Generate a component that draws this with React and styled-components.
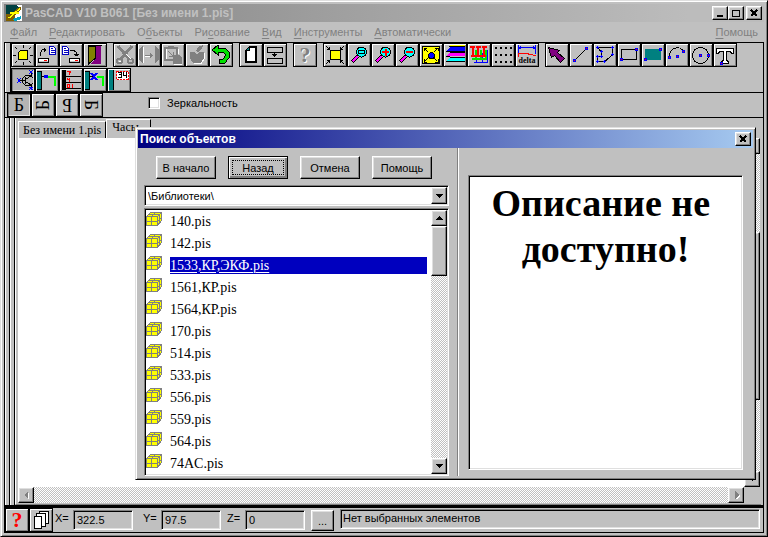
import React, { useState } from "react";
import styled, { createGlobalStyle, css } from "styled-components";

const GlobalStyle = createGlobalStyle`
  *, *::before, *::after { box-sizing: border-box; }
  html, body { margin: 0; height: 100%; }
  body { background: #c0c0c0; overflow: hidden; }
  #root { height: 100%; }
  body, button, input, select { font-family: "Liberation Sans", Arial, sans-serif; font-size: 11px; color: #000; }
  button, input, select, ul { margin: 0; padding: 0; border-radius: 0; }
`;

const face = "#c0c0c0";
const shade = "#808080";
const serif = '"Liberation Serif", "Times New Roman", serif';

const raised = css`
  border: 1px solid;
  border-color: #fff #000 #000 #fff;
  box-shadow: inset -1px -1px 0 ${shade}, inset 1px 1px 0 #dfdfdf;
`;
const sunken = css`
  border: 1px solid;
  border-color: ${shade} #fff #fff ${shade};
  box-shadow: inset 1px 1px 0 #000, inset -1px -1px 0 #dfdfdf;
`;
const checker = css`
  background: repeating-conic-gradient(#fff 0 25%, ${face} 0 50%) 0 0 / 2px 2px;
`;

/* ---------- main window ---------- */

const Window = styled.main`
  position: relative;
  display: flex;
  flex-direction: column;
  height: 100vh;
  padding: 3px;
  background: ${face};
  border: 1px solid;
  border-color: #dfdfdf #000 #000 #dfdfdf;
  box-shadow: inset 1px 1px 0 #fff, inset -1px -1px 0 ${shade};
`;

const TitleBar = styled.header`
  display: flex;
  align-items: center;
  flex: none;
  height: 18px;
  padding: 0 2px;
  gap: 3px;
  font-weight: bold;
  color: ${(p) => (p.$active ? "#fff" : face)};
  background: ${(p) =>
    p.$active
      ? "linear-gradient(90deg, #000080, #a6caf0)"
      : "linear-gradient(90deg, #808080, #a0a0a0 45%, #bcbcbc 90%)"};
`;

const Title = styled.h1`
  flex: 1;
  margin: 0;
  font-size: 12px;
  line-height: 18px;
  white-space: nowrap;
`;

const CaptionButtons = styled.div`
  display: flex;
  gap: ${(p) => p.$gap || 0}px;
`;

const CaptionButton = styled.button`
  display: grid;
  place-items: center;
  width: 16px;
  height: 14px;
  background: ${face};
  ${raised}
`;

const MenuBar = styled.nav`
  display: flex;
  flex: none;
  gap: 12px;
  height: 20px;
  padding: 0 6px;
`;

const MenuItem = styled.button`
  border: 0;
  background: none;
  color: ${shade};
  line-height: 20px;
  margin-left: ${(p) => (p.$last ? "auto" : 0)};
  u { text-underline-offset: 2px; }
`;

const Frame = styled.div`
  display: flex;
  flex-direction: column;
  flex: 1;
  min-height: 0;
  border: 1px solid #000;
`;

const ToolArea = styled.div`
  display: grid;
  grid-template-columns: 6px 1fr;
  flex: none;
  border-bottom: 1px solid #000;
`;

const Grip = styled.div`
  border-left: 1px solid #fff;
  border-right: 1px solid #000;
`;

const ToolRows = styled.div`
  display: grid;
  gap: 1px;
`;

const ToolRow = styled.div`
  display: flex;
  gap: 6px;
  height: 24px;
`;

const ToolGroup = styled.div`
  display: flex;
`;

const ToolButton = styled.button`
  display: grid;
  place-items: center;
  flex: none;
  width: 24px;
  height: 24px;
  background: ${(p) => (p.$pressed ? "#b4b4b4" : face)};
  border: 1px solid #000;
  box-shadow: ${(p) =>
    p.$pressed
      ? `inset 1px 1px 0 ${shade}, inset -1px -1px 0 #dfdfdf`
      : `inset 1px 1px 0 #fff, inset -1px -1px 0 ${shade}`};
  svg { display: block; width: 20px; height: 20px; }
`;

const OptionRow = styled.div`
  display: flex;
  align-items: center;
  flex: none;
  height: 25px;
  padding-left: 2px;
  border-bottom: 1px solid #000;
`;

const Letter = styled.span`
  display: block;
  font: 18px/18px ${serif};
  transform: rotate(${(p) => p.$turn}deg);
`;

const CheckLabel = styled.label`
  display: flex;
  align-items: center;
  gap: 7px;
  margin: 0 0 4px 45px;
`;

const CheckBox = styled.input`
  appearance: none;
  width: 12px;
  height: 12px;
  margin: 0;
  background: #fff;
  ${sunken}
`;

/* ---------- workspace ---------- */

const Workspace = styled.section`
  display: grid;
  grid-template-columns: 5px 5px 1fr;
  flex: 1;
  min-height: 0;
  padding-right: 2px;
`;

const Sheet = styled.div`
  display: grid;
  grid-template: 20px 1fr 16px / 1fr 16px;
  padding: 0 1px 1px 2px;
  border-left: 1px solid #fff;
  border-bottom: 1px solid ${shade};
`;

const Tabs = styled.div`
  display: flex;
  align-items: flex-end;
  grid-column: 1 / -1;
`;

const Tab = styled.button`
  height: ${(p) => (p.$active ? 19 : 17)}px;
  padding: 0 4px;
  background: ${face};
  font: 12px/15px ${serif};
  border: solid;
  border-width: 1px 1px 0;
  border-color: #fff #000 #fff #fff;
  text-align: left;
  ${(p) => p.$active && "width: 45px; padding: 0 5px 3px;"}
`;

const Canvas = styled.div`
  background: #fff;
`;

const Bar = styled.div`
  display: flex;
  flex-direction: ${(p) => (p.$vertical ? "column" : "row")};
  justify-content: space-between;
  ${checker}
`;

const BarButton = styled.button`
  display: grid;
  place-items: center;
  flex: none;
  width: 16px;
  height: 16px;
  background: ${face};
  ${raised}
`;

const Track = styled.div`
  flex: 1;
  padding: ${(p) => p.$top || 0}px 0 0;
`;

const Thumb = styled.div`
  height: ${(p) => p.$size}px;
  background: ${face};
  ${raised}
`;

/* ---------- status bar ---------- */

const StatusBar = styled.footer`
  display: flex;
  align-items: flex-start;
  flex: none;
  height: 27px;
  border-top: 3px solid #000;
`;

const Coord = styled.label`
  display: flex;
  line-height: 20px;
`;

const CoordName = styled.span`
  width: ${(p) => 18 + p.$indent}px;
  padding-left: ${(p) => p.$indent}px;
`;

const CoordInput = styled.input`
  width: 60px;
  height: 20px;
  margin: 2px 6px 0 0;
  padding: 0 3px;
  background: ${face};
  ${sunken}
`;

const MoreButton = styled.button`
  width: 23px;
  height: 21px;
  margin: 2px 6px 0 0;
  background: ${face};
  ${raised}
`;

const Message = styled.output`
  flex: 1;
  height: 20px;
  margin: 1px 3px 0 0;
  padding: 0 2px;
  line-height: 16px;
  ${sunken}
`;

/* ---------- dialog ---------- */

const Dialog = styled.section`
  position: absolute;
  inset: 126px 11px 56px 134px;
  display: flex;
  flex-direction: column;
  padding: 2px;
  background: ${face};
  border: 1px solid;
  border-color: #dfdfdf #000 #000 #dfdfdf;
  box-shadow: inset 1px 1px 0 #fff, inset -1px -1px 0 ${shade};
`;

const DialogBody = styled.div`
  display: grid;
  grid-template-columns: 320px 1fr;
  flex: 1;
  min-height: 0;
`;

const SearchPane = styled.div`
  display: flex;
  flex-direction: column;
  margin: 0 0 3px;
  padding: 8px 8px 0 6px;
  border-right: 1px solid ${shade};
`;

const Actions = styled.div`
  display: flex;
  gap: 12px;
  margin: 0 0 6px 12px;
`;

const ActionButton = styled.button`
  width: 60px;
  height: 23px;
  background: ${face};
  ${raised}
  ${(p) =>
    p.$current &&
    `outline: 1px dotted #000; outline-offset: -5px;
     border-color: #000;
     box-shadow: inset 1px 1px 0 #fff, inset -2px -2px 0 ${shade};`}
`;

const Combo = styled.div`
  position: relative;
  height: 21px;
  margin-bottom: 2px;
  background: #fff;
  ${sunken}
`;

const ComboSelect = styled.select`
  appearance: none;
  width: 100%;
  height: 19px;
  padding: 0 18px 0 3px;
  border: 0;
  background: none;
`;

const ComboArrow = styled.span`
  position: absolute;
  top: 1px;
  right: 1px;
  display: grid;
  place-items: center;
  width: 16px;
  height: 17px;
  background: ${face};
  pointer-events: none;
  ${raised}
`;

const ListFrame = styled.div`
  display: grid;
  grid-template-columns: 1fr 16px;
  flex: 1;
  min-height: 0;
  padding: 1px;
  background: #fff;
  ${sunken}
`;

const FileList = styled.ul`
  list-style: none;
  overflow: hidden;
`;

const FileRow = styled.li`
  display: grid;
  grid-template-columns: 16px 1fr;
  align-items: center;
  gap: 8px;
  height: 22px;
  padding-right: 4px;
  font: 14px/17px ${serif};
  cursor: default;
  svg { display: block; margin-bottom: 4px; }
`;

const FileName = styled.span`
  ${(p) => p.$selected && "background: #0000bf; color: #fff; text-decoration: underline; text-underline-offset: 2px;"}
`;

const PreviewPane = styled.div`
  display: flex;
  margin-bottom: 3px;
  padding: 27px 10px 6px 9px;
  border-left: 1px solid #fff;
`;

const Preview = styled.article`
  flex: 1;
  padding: 4px 10px;
  background: #fff;
  ${sunken}
`;

const PreviewText = styled.h2`
  margin: 0;
  font: bold 38px/46px ${serif};
  text-align: center;
`;

/* ---------- drawings ---------- */

const Icon = ({ children, smooth }) => (
  <svg viewBox="0 0 20 20" fill="none" stroke="#000" shapeRendering={smooth ? "auto" : "crispEdges"} aria-hidden="true">
    {children}
  </svg>
);

const Node = ({ x, y }) => (
  <g stroke="none">
    <path fill="#0000ff" d={`M${x - 1} ${y - 1}h3v3h-3z`} />
    <path fill="#ff0000" d={`M${x} ${y}h1v1h-1z`} />
  </g>
);

const Disk = ({ x }) => (
  <g transform={`translate(${x} 13)`}>
    <path fill="#fff" stroke="#000" d="M.5 .5h10v4h-10z" />
    <path stroke={face} d="M1 3.5h9" />
    <path stroke="#ff0000" d="M6 2.5h3" />
  </g>
);

const Page = ({ x }) => (
  <g transform={`translate(${x} 1)`}>
    <path fill="#fff" stroke="#0000c0" d="M.5 .5h4l2 2v6h-6z" />
    <path stroke="#0000c0" d="M2 2.5h2M2 4.5h4M2 6.5h4" />
  </g>
);

const CornerArrows = () => (
  <path d="M1 1l3 3M2 4.5h3M4.5 2v3M19 1l-3 3M18 4.5h-3M15.500 2v3M1 19l3-3M2 15.500h3M4.500 18v-3M19 19l-3-3M18 15.500h-3M15.500 18v-3" />
);

const Lens = ({ children }) => (
  <Icon>
    <path stroke="#000" strokeWidth="4" d="M8.500 11.500L3 17" />
    <path stroke="#ff00ff" strokeWidth="2" d="M8.500 11.500L3.500 16.500" />
    <circle cx="12.500" cy="7" r="5" fill="#00ffff" />
    {children}
  </Icon>
);

const Glyph = ({ x, y, size, fill = "#000", children }) => (
  <text x={x} y={y} fontSize={size} fill={fill} stroke="none"
    fontFamily="Liberation Serif" fontWeight="bold" textAnchor="middle">
    {children}
  </text>
);

const icons = {
  sun: (
    <Icon>
      <path fill="#ffff00" d="M7.500 5.500h7v9h-9v-7z" />
      <path d="M10 0v3M10 17v3M0 10.500h3M17 10.500h3M2 2l2 2M18 2l-2 2M2 18l2-2M18 18l-2-2" />
    </Icon>
  ),
  open: (
    <Icon><Disk x={1} /><Page x={12} />
      <path d="M3.500 11V7.500L5.500 4.500H8M7.500 2.500v4M8.500 3.500v2" /></Icon>
  ),
  save: (
    <Icon><Disk x={8} /><Page x={1} />
      <path d="M9 5.500h4l2.500 2V10M13 9.500h5M14 10.500h3" /></Icon>
  ),
  door: (
    <Icon>
      <path fill="#808000" d="M3.500 1h7v12l-7 6z" />
      <path fill="#800080" stroke="none" d="M11 1h5v18H6l5-6z" />
      <path d="M3.500 19V.5h13" />
    </Icon>
  ),
  cut: (
    <Icon>
      <path stroke={shade} strokeWidth="3" d="M3 1l11 13M17 1L6 14" />
      <circle cx="4.500" cy="16" r="2.500" stroke={shade} strokeWidth="2" />
      <circle cx="15.500" cy="16" r="2.500" stroke={shade} strokeWidth="2" />
      <path stroke="#fff" d="M11 9l5 5M4 17l2-1" />
    </Icon>
  ),
  mirror: (
    <Icon>
      <path fill={shade} stroke="none" d="M0 4l4-3v17l-4-3zM20 4l-4-3v17l4-3zM11 7l3 3.500-3 3.500z" />
      <path stroke={shade} d="M6 10.500h6" />
      <path stroke="#fff" d="M4.500 2v16M6 11.500h5" />
    </Icon>
  ),
  paste: (
    <Icon>
      <path stroke={shade} strokeWidth="2" d="M2 3h12v12H2zM5 2h6" />
      <path stroke={shade} d="M5 6l5 5M10.500 7v4.500H6" />
      <path fill={shade} stroke="none" d="M10 10h6l3 3v6h-9z" />
      <path stroke="#fff" d="M3.500 4v10M15.500 4v5M11 19.500h8" />
    </Icon>
  ),
  apple: (
    <Icon>
      <path fill={shade} stroke="none" d="M3 7h4l3 2 3-2h4v6l-3 5H6l-3-5zM9 6l2-4 5-2-1 4-4 3z" />
      <path stroke="#fff" d="M17.500 8v5l-3 5H7" />
    </Icon>
  ),
  undo: (
    <Icon>
      <path stroke="#000" strokeWidth="5" d="M5 5h8l3 3v4l-3 4H8" />
      <path fill="#00e000" d="M1 5l6-5v10z" />
      <path stroke="#00e000" strokeWidth="3" d="M5 5h8l3 3v4l-3 4H9" />
    </Icon>
  ),
  blank: (
    <Icon>
      <path fill="#fff" d="M8.500 1.500h7v16h-11v-12z" />
      <path d="M8 2.500h8M14.500 2v15M5.500 6v11M5 16.500h10" />
      <path fill="#008080" d="M4.500 5.500l4-4v4z" />
    </Icon>
  ),
  insert: (
    <Icon><path d="M2.500 2.500h15v5h-15zM2.500 13.500h15v5h-15zM9.500 7v5M7 9.500h5M8 10.500h3" /></Icon>
  ),
  help: (<Icon smooth><Glyph x={11} y={18} size={22} fill="#fff">?</Glyph><Glyph x={10} y={17} size={22} fill={shade}>?</Glyph></Icon>),
  fit: (<Icon><path fill="#ffff00" d="M5.500 5.500h10v9h-10z" /><CornerArrows /></Icon>),
  zoomArea: (<Lens><path fill="#00ffff" d="M9.500 5.500h6v3h-6z" /></Lens>),
  zoomIn: (<Lens><path stroke="#ff0000" strokeWidth="2" d="M9 7h7M12.500 4v7" /></Lens>),
  zoomOut: (<Lens><path stroke="#ff0000" strokeWidth="2" d="M9 7h7" /></Lens>),
  extents: (
    <Icon>
      <path fill="#ffff00" d="M1.500 1.500h17v17h-17z" />
      <circle cx="10.500" cy="10.500" r="3" fill="#0000ff" />
      <path d="M3 6V3.500h3M4 4l3 3M14 3.500h3V6M16 4l-3 3M3 14v3h3M4 16l3-3M14 17h3v-3M16 16l-3-3" />
    </Icon>
  ),
  layers: (
    <Icon>
      <path stroke="none" fill="#ffff00" d="M5 0h15v2H4z" />
      <path stroke="none" fill="#0000ff" d="M5 2h15v4H1z" />
      <path stroke="none" fill="#ff00ff" d="M5 8h15v3H1z" />
      <path stroke="none" fill="#00ffff" d="M5 13h15v3H1z" />
      <path d="M4 1.500h16M5 7.500h15M1 6.500h19M5 12.500h15M1 11.500h4M1 16.500h19" />
    </Icon>
  ),
  buses: (
    <Icon>
      <path stroke="#0000ff" d="M5 17.500h14M7.500 17V8M13.500 17V8M18.500 17V5" />
      <path stroke="#00e000" strokeWidth="2" d="M3 14h15M7 14V5M12 14V5M17 14V5" />
      <path stroke="#ff0000" strokeWidth="2" d="M2 11h15M4 11V3M9 11V3M15 11V3M1 2h5M7 2h5M13 2h5" />
    </Icon>
  ),
  dots: (
    <Icon>
      {[2, 9, 16].map((y) => [2, 7, 12, 17].map((x) => (
        <path key={`${x}-${y}`} stroke="none" fill="#000" d={`M${x} ${y}h2v2h-2z`} />
      )))}
    </Icon>
  ),
  delta: (
    <Icon>
      <path stroke="#0000ff" d="M1.500 0v9M18.500 0v9M2 2.500h16M4 1l-2 2 2 1M16 1l2 2-2 1" />
      <path stroke="#ff0000" d="M1.500 12V8.500h9l2 1h3l1 1h2" />
      <Glyph x={10} y={18} size={8}>delta</Glyph>
    </Icon>
  ),
  pointer: (<Icon><path fill="#800080" d="M1.500 2.500l11 3-2 2 7 6-4 4-6-7-3 2z" /></Icon>),
  line: (<Icon><path d="M3 16L15.500 3.500" /><Node x={3} y={15} /><Node x={15} y={3} /></Icon>),
  polygon: (
    <Icon>
      <path d="M2.500 2.500h15v7L10 16.500H2.500v-5H6V6.500z" />
      {[[2, 2], [17, 2], [17, 9], [9, 16], [2, 16], [2, 11], [6, 11], [6, 6]].map(([x, y]) => (
        <path key={`${x}-${y}`} stroke="#0000ff" d={`M${x - 1} ${y + 0.5}h3M${x + 0.5} ${y - 1}v3`} />
      ))}
    </Icon>
  ),
  rect: (<Icon><path d="M2.500 4.500h15v10h-15z" /><Node x={2} y={14} /><Node x={17} y={4} /></Icon>),
  filled: (<Icon><path fill="#008080" stroke="none" d="M2 4h16v11H2z" /><Node x={2} y={14} /><Node x={17} y={4} /></Icon>),
  arc: (<Icon><path d="M2.500 12C2.500 1 14 1 16.500 6.500" /><Node x={2} y={12} /><Node x={10} y={11} /><Node x={16} y={6} /></Icon>),
  circle: (<Icon><circle cx="9.500" cy="10.500" r="8" /><Node x={9} y={10} /><Node x={17} y={10} /></Icon>),
  text: (
    <Icon>
      <path fill="#fff" d="M1.500 3.500h17v5h-2l-1-2h-4v9l2 1v2h-7v-2l2-1v-9h-4l-1 2h-2z" />
      <Node x={6} y={18} />
    </Icon>
  ),
  part: (
    <Icon>
      <circle cx="15" cy="10.500" r="5.500" />
      <path d="M5 10.500h8M12.500 7v7M13 9l5-3V1M13 12l5 3v5M15 13l3 2" />
      <path stroke="#0000ff" d="M4 8l4 5M8 8l-4 5M16 0l4 4M20 0l-4 4M16 17l4 3M20 17l-4 3" />
    </Icon>
  ),
  wire: (
    <Icon>
      <path fill="#008080" d="M-.5 1.500h5v18h-5z" />
      <path d="M5 6.500h4" />
      <path stroke="#00ff00" strokeWidth="2" d="M11 7h7v9" />
      <path stroke="none" fill="#0000ff" d="M7 5h4v3H7z" />
    </Icon>
  ),
  pins: (
    <Icon>
      <path fill="#000" stroke="none" d="M1 0h4v20H1z" />
      <path d="M5 6.500h15M5 12.500h15M5 18.500h15" />
      <path stroke="#ff0000" d="M6 1.500h3v1l-1 2M6.500 8v1.500H9M8.500 8v4M6 14.500h2v3h-2zM11.500 14v4" />
    </Icon>
  ),
  unlink: (
    <Icon>
      <path fill="#008080" d="M-.5 1.500h5v18h-5z" />
      <path d="M5 6.500h4" />
      <path stroke="#00ff00" strokeWidth="2" d="M12 7h6v9" />
      <path stroke="#0000ff" strokeWidth="2" d="M6 3l6 7M12 3l-6 7" />
    </Icon>
  ),
  number: (
    <Icon>
      <path fill="#008080" stroke="none" d="M0 0h4v20H0z" />
      <path d="M4.500 0v20" />
      <path fill="#fff" stroke="#ff0000" strokeDasharray="2 1" d="M7.500 1.500h12v8h-12z" />
      <path d="M9 2.500h3v5H9M10 4.500h2M14.500 2v3H18M17.500 2v6" />
    </Icon>
  ),
  query: (<Icon smooth><Glyph x={10} y={17} size={22} fill="#ff0000">?</Glyph></Icon>),
  pages: (
    <Icon><path fill="#fff" d="M8.500 1.500h9v12h-9z" /><path fill="#fff" d="M5.500 3.500h9v13h-9z" /><path fill="#fff" d="M3.500 6.500h7v12h-7z" /></Icon>
  ),
};

const Cube = () => (
  <svg width="16" height="14" viewBox="0 0 16 14" shapeRendering="crispEdges" aria-hidden="true">
    <path fill="#ffff00" stroke={shade} d="M.5 4.500l4-4h11v8l-4 5h-11z" />
    <path fill="none" stroke={shade} d="M.5 4.500h11v9M11.500 4.500l4-4M5.500 4v9M0 9.500h11.500l4-4M5.500 4.500l4-4M2.500 2.500h11v8" />
  </svg>
);

const arrowPaths = {
  up: "M1 6h7L4.500 2z",
  down: "M1 2h7L4.500 6z",
  left: "M6 0v8L2 4z",
  right: "M3 0v8l4-4z",
};

const Arrow = ({ dir, dim }) => (
  <svg width="9" height="8" viewBox="0 0 9 8" shapeRendering="crispEdges" aria-hidden="true">
    {dim && <path fill="#fff" transform="translate(1 1)" d={arrowPaths[dir]} />}
    <path fill={dim ? shade : "#000"} d={arrowPaths[dir]} />
  </svg>
);

const captionPaths = {
  min: "M2 8h6",
  max: "M1 2h8M1.500 2v7M8.500 2v7M1 8.500h8",
  close: "M2 2l6 6M8 2l-6 6",
};

const Caption = ({ kind, label }) => (
  <CaptionButton aria-label={label}>
    <svg width="10" height="10" viewBox="0 0 10 10" fill="none" stroke="#000" strokeWidth={kind === "max" ? 1 : 2} shapeRendering="crispEdges">
      <path d={captionPaths[kind]} />
    </svg>
  </CaptionButton>
);

const Logo = () => (
  <svg width="16" height="16" viewBox="0 0 16 16" shapeRendering="crispEdges" aria-hidden="true">
    <path fill="#fff" d="M0 0h16v16H0z" />
    <path fill="#004040" d="M0 0h10l3 3-8 8H0z" />
    <path fill="#806000" d="M0 9h9v7H0z" />
    <path fill="#00a0c0" d="M6 14l9-3v3l-6 2z" />
    <path fill="#ffff00" stroke="#806000" d="M1 13L14 2l1 2L4 14z" />
    <path stroke="#ffff00" strokeWidth="2" d="M4 8h9" />
  </svg>
);

/* ---------- data ---------- */

const menus = [
  ["", "Ф", "айл"],
  ["", "Р", "едактировать"],
  ["О", "б", "ъекты"],
  ["Ри", "с", "ование"],
  ["", "В", "ид"],
  ["", "И", "нструменты"],
  ["", "А", "втоматически"],
  ["", "П", "омощь"],
];

const toolGroups = [
  [["sun", "Начало"], ["open", "Открыть"], ["save", "Сохранить"], ["door", "Выход"]],
  [["cut", "Вырезать"], ["mirror", "Отразить"], ["paste", "Вставить"], ["apple", "Объект"], ["undo", "Отменить"]],
  [["blank", "Новый лист"], ["insert", "Вставка"]],
  [["help", "Справка"]],
  [["fit", "Вписать"], ["zoomArea", "Область"], ["zoomIn", "Увеличить"], ["zoomOut", "Уменьшить"], ["extents", "Всё"],
    ["layers", "Слои"], ["buses", "Шины"], ["dots", "Сетка"], ["delta", "Приращение"]],
  [["pointer", "Выбор"], ["line", "Линия"], ["polygon", "Контур"], ["rect", "Прямоугольник"], ["filled", "Заливка"],
    ["arc", "Дуга"], ["circle", "Окружность"], ["text", "Текст"]],
];

const partTools = [["part", "Компонент"], ["wire", "Провод"], ["pins", "Выводы"], ["unlink", "Разрыв"], ["number", "Номер"]];

const coords = [
  { axis: "X", value: "322.5", indent: 2 },
  { axis: "Y", value: "97.5", indent: 4 },
  { axis: "Z", value: "0", indent: 0 },
];

const files = ["140.pis", "142.pis", "1533,КР,ЭКФ.pis", "1561,КР.pis", "1564,КР.pis", "170.pis", "514.pis", "533.pis",
  "556.pis", "559.pis", "564.pis", "74AC.pis"];

const Tools = ({ items, pressed }) => (
  <ToolGroup>
    {items.map(([name, label]) => (
      <ToolButton key={name} aria-label={label} $pressed={name === pressed}>{icons[name]}</ToolButton>
    ))}
  </ToolGroup>
);

function SearchDialog() {
  const [selected, setSelected] = useState("1533,КР,ЭКФ.pis");
  return (
    <Dialog role="dialog" aria-label="Поиск объектов">
      <TitleBar $active>
        <Title as="h2">Поиск объектов</Title>
        <Caption kind="close" label="Закрыть" />
      </TitleBar>
      <DialogBody>
        <SearchPane>
          <Actions>
            {["В начало", "Назад", "Отмена", "Помощь"].map((name) => (
              <ActionButton key={name} $current={name === "Назад"}>{name}</ActionButton>
            ))}
          </Actions>
          <Combo>
            <ComboSelect aria-label="Папка"><option>\Библиотеки\</option></ComboSelect>
            <ComboArrow><Arrow dir="down" /></ComboArrow>
          </Combo>
          <ListFrame>
            <FileList role="listbox" aria-label="Файлы">
              {files.map((name) => (
                <FileRow key={name} role="option" aria-selected={name === selected} onClick={() => setSelected(name)}>
                  <Cube />
                  <FileName $selected={name === selected}>{name}</FileName>
                </FileRow>
              ))}
            </FileList>
            <Bar $vertical>
              <BarButton aria-label="Вверх"><Arrow dir="up" /></BarButton>
              <Track><Thumb $size={50} /></Track>
              <BarButton aria-label="Вниз"><Arrow dir="down" /></BarButton>
            </Bar>
          </ListFrame>
        </SearchPane>
        <PreviewPane>
          <Preview><PreviewText>Описание не&nbsp;<br />доступно!</PreviewText></Preview>
        </PreviewPane>
      </DialogBody>
    </Dialog>
  );
}

export default function App() {
  return (
    <>
      <GlobalStyle />
      <Window>
        <TitleBar>
          <Logo />
          <Title>PasCAD V10 B061 [Без имени 1.pis]</Title>
          <CaptionButtons $gap={2}>
            <CaptionButtons>
              <Caption kind="min" label="Свернуть" />
              <Caption kind="max" label="Развернуть" />
            </CaptionButtons>
            <Caption kind="close" label="Закрыть" />
          </CaptionButtons>
        </TitleBar>
        <MenuBar>
          {menus.map(([before, key, after], i) => (
            <MenuItem key={after} $last={i === menus.length - 1}>{before}<u>{key}</u>{after}</MenuItem>
          ))}
        </MenuBar>
        <Frame>
          <ToolArea>
            <Grip />
            <ToolRows>
              <ToolRow>{toolGroups.map((items) => <Tools key={items[0][0]} items={items} />)}</ToolRow>
              <ToolRow><Tools items={partTools} pressed="part" /></ToolRow>
            </ToolRows>
          </ToolArea>
          <OptionRow>
            {[0, -90, 180, 90].map((turn) => (
              <ToolButton key={turn} $pressed={turn === 0} aria-label={`Поворот ${turn}`}>
                <Letter $turn={turn}>Б</Letter>
              </ToolButton>
            ))}
            <CheckLabel><CheckBox type="checkbox" />Зеркальность</CheckLabel>
          </OptionRow>
          <Workspace>
            <Grip />
            <Grip />
            <Sheet>
              <Tabs role="tablist">
                <Tab role="tab">Без имени 1.pis</Tab>
                <Tab role="tab" aria-selected="true" $active>Часы</Tab>
              </Tabs>
              <Canvas />
              <Bar $vertical>
                <BarButton aria-label="Вверх"><Arrow dir="up" /></BarButton>
                <Track $top={78}><Thumb $size={168} /></Track>
                <BarButton aria-label="Вниз"><Arrow dir="down" /></BarButton>
              </Bar>
              <Bar>
                <BarButton aria-label="Влево"><Arrow dir="left" dim /></BarButton>
                <BarButton aria-label="Вправо"><Arrow dir="right" dim /></BarButton>
              </Bar>
            </Sheet>
          </Workspace>
          <StatusBar>
            <ToolButton aria-label="Справка">{icons.query}</ToolButton>
            <ToolButton aria-label="Листы">{icons.pages}</ToolButton>
            {coords.map(({ axis, value, indent }) => (
              <Coord key={axis}>
                <CoordName $indent={indent}>{axis}=</CoordName>
                <CoordInput defaultValue={value} />
              </Coord>
            ))}
            <MoreButton aria-label="Дополнительно">...</MoreButton>
            <Message>Нет выбранных элементов</Message>
          </StatusBar>
        </Frame>
        <SearchDialog />
      </Window>
    </>
  );
}
